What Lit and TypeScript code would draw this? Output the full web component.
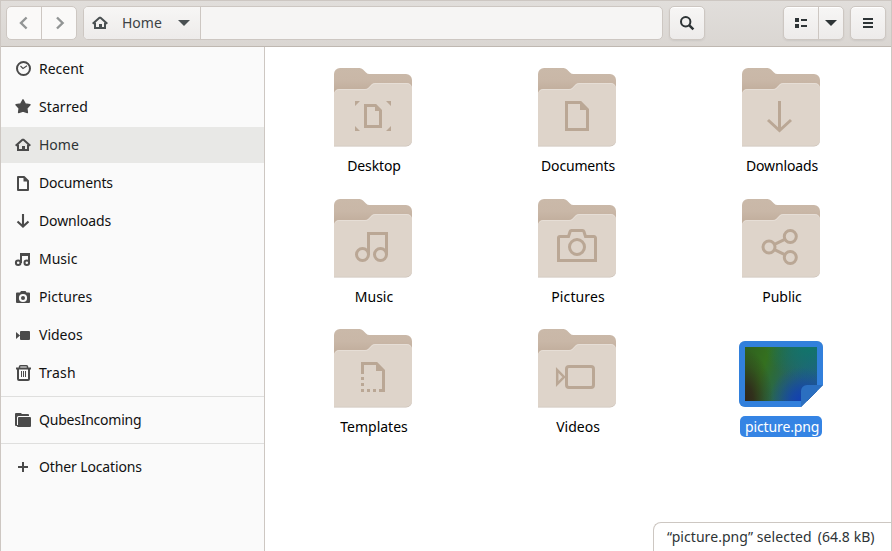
import { LitElement, html, css, svg, type SVGTemplateResult } from "lit";
import { customElement, property } from "lit/decorators.js";
import { styleMap } from "lit/directives/style-map.js";

const HOME = svg`<path d="M8 2.200 0.700 8.700M8 2.200l7.300 6.500" fill="none" stroke="currentColor" stroke-width="2"/><path d="M2 7.500h2V12h3V9h3v3h2V7.500h2V14H2z" fill="currentColor"/>`;

const SYMBOLS: Record<string, SVGTemplateResult> = {
  home: HOME,
  recent: svg`<circle cx="8.500" cy="7.500" r="6.500" fill="none" stroke="currentColor" stroke-width="2"/><path d="M5.500 5 8 7.500 12 4.800" fill="none" stroke="currentColor" stroke-width="1.100"/>`,
  starred: svg`<path d="M8 0.800 10.200 4.900 15 5.700 11.800 9.200 12.400 13.600 8 12 3.600 13.600 4.200 9.200 1 5.700 5.800 4.900z" fill="currentColor" stroke="currentColor" stroke-width="1.400" stroke-linejoin="round"/>`,
  documents: svg`<path d="M3 2h6l4 4v9H3z" fill="none" stroke="currentColor" stroke-width="2" stroke-linejoin="round"/><path d="M8.500 2v4.500H13z" fill="currentColor"/>`,
  downloads: svg`<path d="M8 1v12.500M2.500 8.500 8 13.600l5.500-5.100" fill="none" stroke="currentColor" stroke-width="2.100"/>`,
  music: svg`<circle cx="3.200" cy="11.800" r="2.300" fill="none" stroke="currentColor" stroke-width="2"/><circle cx="11.800" cy="11.800" r="2.300" fill="none" stroke="currentColor" stroke-width="2"/><path d="M5 12V2h10v10h-2V5H7v7z" fill="currentColor"/>`,
  pictures: svg`<path fill-rule="evenodd" d="M5 3.500 6 2h4.500l1 1.500H14a1 1 0 0 1 1 1V13a1 1 0 0 1-1 1H2a1 1 0 0 1-1-1V4.500a1 1 0 0 1 1-1zM8 4.900a4.100 4.100 0 1 0 0 8.200a4.100 4.100 0 0 0 0-8.200z" fill="currentColor"/><circle cx="8" cy="9" r="2" fill="currentColor"/>`,
  videos: svg`<path d="M1 5v7l4-3.500zM6 4h8a1 1 0 0 1 1 1v7a1 1 0 0 1-1 1H6a1 1 0 0 1-1-1V5a1 1 0 0 1 1-1z" fill="currentColor"/>`,
  trash: svg`<path d="M1 2.500h15v2H1z" fill="currentColor"/><path d="M4.500 3V1.800a1 1 0 0 1 1-1h6a1 1 0 0 1 1 1V3" fill="none" stroke="currentColor" stroke-width="1.500"/><path d="M3 4v10a1 1 0 0 0 1 1h9a1 1 0 0 0 1-1V4" fill="none" stroke="currentColor" stroke-width="2"/><path d="M6.500 6v6M8.500 6v6M10.500 6v6" stroke="currentColor" stroke-width="1"/>`,
  folder: svg`<path d="M1 1h4.500a1 1 0 0 1 1 .500L7 2h6a1 1 0 0 1 1 1v1H3.500A1.500 1.500 0 0 0 2 5.500V14H1a1 1 0 0 1-1-1V2a1 1 0 0 1 1-1z" fill="currentColor"/><path d="M4 5h11a1 1 0 0 1 1 1v8a1 1 0 0 1-1 1H3a1 1 0 0 1-1-1V13h1V6a1 1 0 0 1 1-1z" fill="currentColor"/>`,
  plus: svg`<path d="M7 3h2v4h4v2H9v4H7V9H3V7h4z" fill="currentColor"/>`,
  back: svg`<path d="M10.600 2.500 5 8l5.600 5.500" fill="none" stroke="currentColor" stroke-width="2.400"/>`,
  forward: svg`<path d="M6 2.500 11.600 8 6 13.500" fill="none" stroke="currentColor" stroke-width="2.400"/>`,
  down: svg`<path d="M2 5h12L8 11z" fill="currentColor"/>`,
  search: svg`<circle cx="6.700" cy="6.700" r="4.700" fill="none" stroke="currentColor" stroke-width="2"/><path d="M9.800 9.800 14.400 14.400" stroke="currentColor" stroke-width="2.500"/>`,
  list: svg`<path d="M2 3h4v4H2zM2 9h4v4H2zM8 4h6v2H8zM8 10h6v2H8z" fill="currentColor"/>`,
  menu: svg`<path d="M3 3h10v2H3zM3 7h10v2H3zM3 11h10v2H3z" fill="currentColor"/>`,
};

const EMBLEMS: Record<string, SVGTemplateResult> = {
  Desktop: svg`<path class="f" d="M21 33h5l-5 5zM57 33v5l-5-5zM21 63v-5l5 5zM57 63h-5l5-5z"/><path class="s" d="M31.500 37.500h10l5 5v16h-15z"/><path class="f" d="M41 37v6h6z"/>`,
  Documents: svg`<path class="s" d="M28.500 34.500h14l7 7v20h-21z"/><path class="f" d="M42 34v8h8z"/>`,
  Downloads: svg`<path class="s" d="M37.500 33v29M26 52l11.500 10.500L49 52"/>`,
  Music: svg`<circle class="s" cx="28.500" cy="55.500" r="6"/><circle class="s" cx="46.500" cy="55.500" r="6"/><path class="s" d="M34.500 56V34.500h18V56"/>`,
  Pictures: svg`<path class="s" d="M22 37.500h8.500l1.600-5a1.500 1.500 0 0 1 1.400-1h11a1.500 1.500 0 0 1 1.400 1l1.600 5H56a1.500 1.500 0 0 1 1.500 1.500v22.500h-37V39a1.500 1.500 0 0 1 1.500-1.500z"/><circle class="s" cx="39" cy="48" r="7.500"/>`,
  Public: svg`<circle class="s" cx="27" cy="48" r="6"/><circle class="s" cx="48.300" cy="37.500" r="6"/><circle class="s" cx="48.300" cy="58.500" r="6"/><path class="s" d="M32.500 45.300l10.300-5M32.500 50.700l10.300 5"/>`,
  Templates: svg`<path class="s" d="M28.500 45V34.500h14l7 7v20H45"/><path class="f" d="M42 34v8h8zM27 48h3v3h-3zM27 54h3v3h-3zM27 60h3v3h-3zM33 60h3v3h-3zM39 60h3v3h-3z"/>`,
  Videos: svg`<rect class="s" x="28.500" y="37.500" width="27" height="21" rx="2.500"/><path class="s thin" d="M19.200 41v14l6.800-7z"/>`,
};

@customElement("symbol-icon")
export class SymbolIcon extends LitElement {
  @property() name = "";
  static styles = css`
    :host { display: block; width: 16px; height: 16px; flex: none; }
    svg { display: block; overflow: visible; }
  `;
  render() {
    return html`<svg width="16" height="16" viewBox="0 0 16 16">${SYMBOLS[this.name]}</svg>`;
  }
}

@customElement("folder-icon")
export class FolderIcon extends LitElement {
  @property() name = "";
  static styles = css`
    :host { display: block; width: 78px; height: 79px; }
    svg { display: block; }
    .f { fill: #baa795; }
    .s { fill: none; stroke: #baa795; stroke-width: 3; }
    .thin { stroke-width: 2.500; }
  `;
  render() {
    return html`<svg width="78" height="79" viewBox="0 0 78 79">
      <defs>
        <linearGradient id="back" x1="0" y1="0" x2="0" y2="1">
          <stop offset="0" stop-color="#cab9a9" /><stop offset="0.2" stop-color="#c9b7a7" /><stop offset="0.33" stop-color="#c3b09f" />
        </linearGradient>
      </defs>
      <path fill="url(#back)" d="M6 0h19.500q2 0 3.500 1.500l3 3Q33.500 6 35.500 6H72a6 6 0 0 1 6 6v50H0V6a6 6 0 0 1 6-6z" />
      <path fill="#c9beb4" d="M0 40h78v32.500a6 6 0 0 1-6 6H0z" />
      <path fill="#e6ded6" d="M5 21h26q2 0 3.300-1.300l3.400-3.400Q39 15 41 15h32a5 5 0 0 1 5 5v52a6 6 0 0 1-6 5.500H0V26a5 5 0 0 1 5-5z" />
      <path fill="#ded4ca" d="M5 22h26q2.400 0 3.700-1.300l3.400-3.400Q39.400 16 41.400 16H73a5 5 0 0 1 5 5v50.500a6 6 0 0 1-6 6H0V27a5 5 0 0 1 5-5z" />
      ${EMBLEMS[this.name]}
    </svg>`;
  }
}

@customElement("picture-thumb")
export class PictureThumb extends LitElement {
  static styles = css`
    :host { display: block; width: 84px; height: 66px; filter: drop-shadow(0 0.5px 0.5px rgba(0, 0, 0, 0.2)); }
    .card { width: 84px; height: 66px; box-sizing: border-box; padding: 6px; border-radius: 6px; background: #3280dc; clip-path: polygon(0 0, 100% 0, 100% 44px, 62px 100%, 0 100%); position: relative; }
    .image { width: 72px; height: 54px;
      background:
        radial-gradient(ellipse 32px 34px at 56px 54px, #1340b2 0%, rgba(19, 64, 178, 0.75) 30%, rgba(19, 64, 178, 0.25) 70%, rgba(19, 64, 178, 0)),
        radial-gradient(ellipse 28px 52px at 0 54px, #30261b 0%, rgba(48, 38, 27, 0.85) 30%, rgba(48, 38, 27, 0.3) 70%, rgba(48, 38, 27, 0)),
        radial-gradient(ellipse 44px 34px at 64px 0, #11756b, rgba(17, 117, 107, 0)),
        linear-gradient(108deg, #30601f 0%, #34701f 28%, #2c6a3c 42%, #286656 54%, #22627a 76%, #1f5c90 100%); }
    .fold { position: absolute; right: 0; bottom: 0; width: 22px; height: 22px; border-radius: 6px 0 0 0; background: #2b6fc0; }
  `;
  render() {
    return html`<div class="card"><div class="image"></div><div class="fold"></div></div>`;
  }
}

const PLACES: Array<[string, string, string?]> = [
  ["recent", "Recent"], ["starred", "Starred"], ["home", "Home", "active"], ["documents", "Documents"],
  ["downloads", "Downloads"], ["music", "Music"], ["pictures", "Pictures"], ["videos", "Videos"], ["trash", "Trash"],
];

const FOLDERS = ["Desktop", "Documents", "Downloads", "Music", "Pictures", "Public", "Templates", "Videos"];

// Tracking per label, in pixels.
const TRACKING: Record<string, number> = {
  Starred: 0.07, Documents: -0.18, Downloads: -0.14, Pictures: 0.1, Trash: 0.22,
  QubesIncoming: -0.23, "Other Locations": -0.13, Desktop: -0.12,
};

const label = (name: string, cls: string) =>
  html`<span class=${cls} style=${styleMap({ letterSpacing: `${TRACKING[name] ?? 0}px` })}>${name}</span>`;

@customElement("app-root")
export class AppRoot extends LitElement {
  static styles = css`
    :host { display: block; height: 551px; overflow: hidden; font: 14px/20px "Noto Sans", sans-serif; color: #111; }
    * { box-sizing: border-box; }
    .window { position: relative; display: flex; flex-direction: column; height: 551px; border: solid #cdc7c2; border-width: 1px 1px 0; background: #fff; overflow: hidden; }
    .header { height: 46px; flex: none; display: flex; align-items: flex-start; padding: 5px 5px 0; gap: 6px; background: linear-gradient(#e1dedb, #dad6d2); border-bottom: 1px solid #bfb8b1; color: #2e3436; }
    .btn { height: 34px; display: flex; border: 1px solid #cdc7c2; border-radius: 5px; background: linear-gradient(#f7f6f5, #edebea); box-shadow: 0 1px 2px rgba(0, 0, 0, 0.07), inset 0 1px #fff; overflow: hidden; flex: none; }
    .cell { display: flex; align-items: center; justify-content: center; height: 32px; }
    .cell + .cell { border-left: 1px solid #cdc7c2; }
    .nav { width: 71px; background: #faf9f8; box-shadow: none; color: #929595; }
    .nav .cell { flex: 1; }
    .path { flex: 1; height: 34px; display: flex; border: 1px solid #cdc7c2; border-radius: 5px; background: #f6f5f4; overflow: hidden; }
    .crumb { width: 117px; display: flex; align-items: center; padding-left: 8px; border-right: 1px solid #cdc7c2; background: linear-gradient(#f7f6f5, #edebea); color: #4a5052; }
    .crumb .text { width: 40px; margin: 0 14px; color: #3c4244; }
    .square { width: 36px; }
    .square .cell { flex: 1; }
    .views { width: 61px; margin-left: 72px; }
    .views .cell:first-child { width: 34px; }
    .views .cell:last-child { flex: 1; }
    .body { flex: 1; display: flex; min-height: 0; }
    .sidebar { width: 264px; flex: none; background: #fafafa; border-right: 1px solid #cdc7c2; padding-top: 4px; }
    .row { height: 36px; display: flex; align-items: center; gap: 8px; padding-left: 14px; margin-bottom: 2px; color: #4a4a4a; }
    .row .text { color: #111; }
    .row.active { background: #e8e8e6; }
    .row.active .text { color: #2e3436; }
    .sep { height: 1px; background: #dfdfde; margin: 5px 0; }
    .files { flex: 1; display: grid; grid-template-columns: repeat(3, 204px); grid-template-rows: 131px 130px 130px; padding: 21px 0 0 6px; }
    .file { display: flex; flex-direction: column; align-items: center; }
    .name { margin-top: 8px; height: 21px; line-height: 21px; padding: 0 3px 0 5px; border-radius: 4px; white-space: nowrap; color: #000; }
    .selected .name { background: #3584e4; color: #fff; width: 82px; padding: 0 0 0 5px; margin-top: 9px; letter-spacing: -0.12px; border-radius: 5px; }
    .selected picture-thumb { margin-top: 12px; }
    .status { position: absolute; right: 0; bottom: 0; width: 238px; height: 29px; border: solid #cdc7c2; border-width: 1px 0 0 1px; border-radius: 8px 0 0 0; background: #fff; padding: 4px 0 0 13px; color: #2e3436; white-space: nowrap; display: flex; gap: 6px; letter-spacing: 0.06px; }
  `;

  render() {
    return html`<div class="window">
      <div class="header">
        <div class="btn nav">
          <div class="cell"><symbol-icon name="back"></symbol-icon></div>
          <div class="cell"><symbol-icon name="forward"></symbol-icon></div>
        </div>
        <div class="path">
          <div class="crumb"><symbol-icon name="home"></symbol-icon><span class="text">Home</span><symbol-icon name="down"></symbol-icon></div>
        </div>
        <div class="btn square"><div class="cell"><symbol-icon name="search"></symbol-icon></div></div>
        <div class="btn views">
          <div class="cell"><symbol-icon name="list"></symbol-icon></div>
          <div class="cell"><symbol-icon name="down"></symbol-icon></div>
        </div>
        <div class="btn square"><div class="cell"><symbol-icon name="menu"></symbol-icon></div></div>
      </div>
      <div class="body">
        <div class="sidebar">
          ${PLACES.map(([icon, text, state]) => html`<div class="row ${state ?? ""}"><symbol-icon name=${icon}></symbol-icon>${label(text, "text")}</div>`)}
          <div class="sep"></div>
          <div class="row"><symbol-icon name="folder"></symbol-icon>${label("QubesIncoming", "text")}</div>
          <div class="sep"></div>
          <div class="row"><symbol-icon name="plus"></symbol-icon>${label("Other Locations", "text")}</div>
        </div>
        <div class="files">
          ${FOLDERS.map((name) => html`<div class="file"><folder-icon name=${name}></folder-icon>${label(name, "name")}</div>`)}
          <div class="file selected"><picture-thumb></picture-thumb><span class="name">picture.png</span></div>
        </div>
      </div>
      <div class="status"><span>“picture.png” selected</span><span>(64.8 kB)</span></div>
    </div>`;
  }
}
